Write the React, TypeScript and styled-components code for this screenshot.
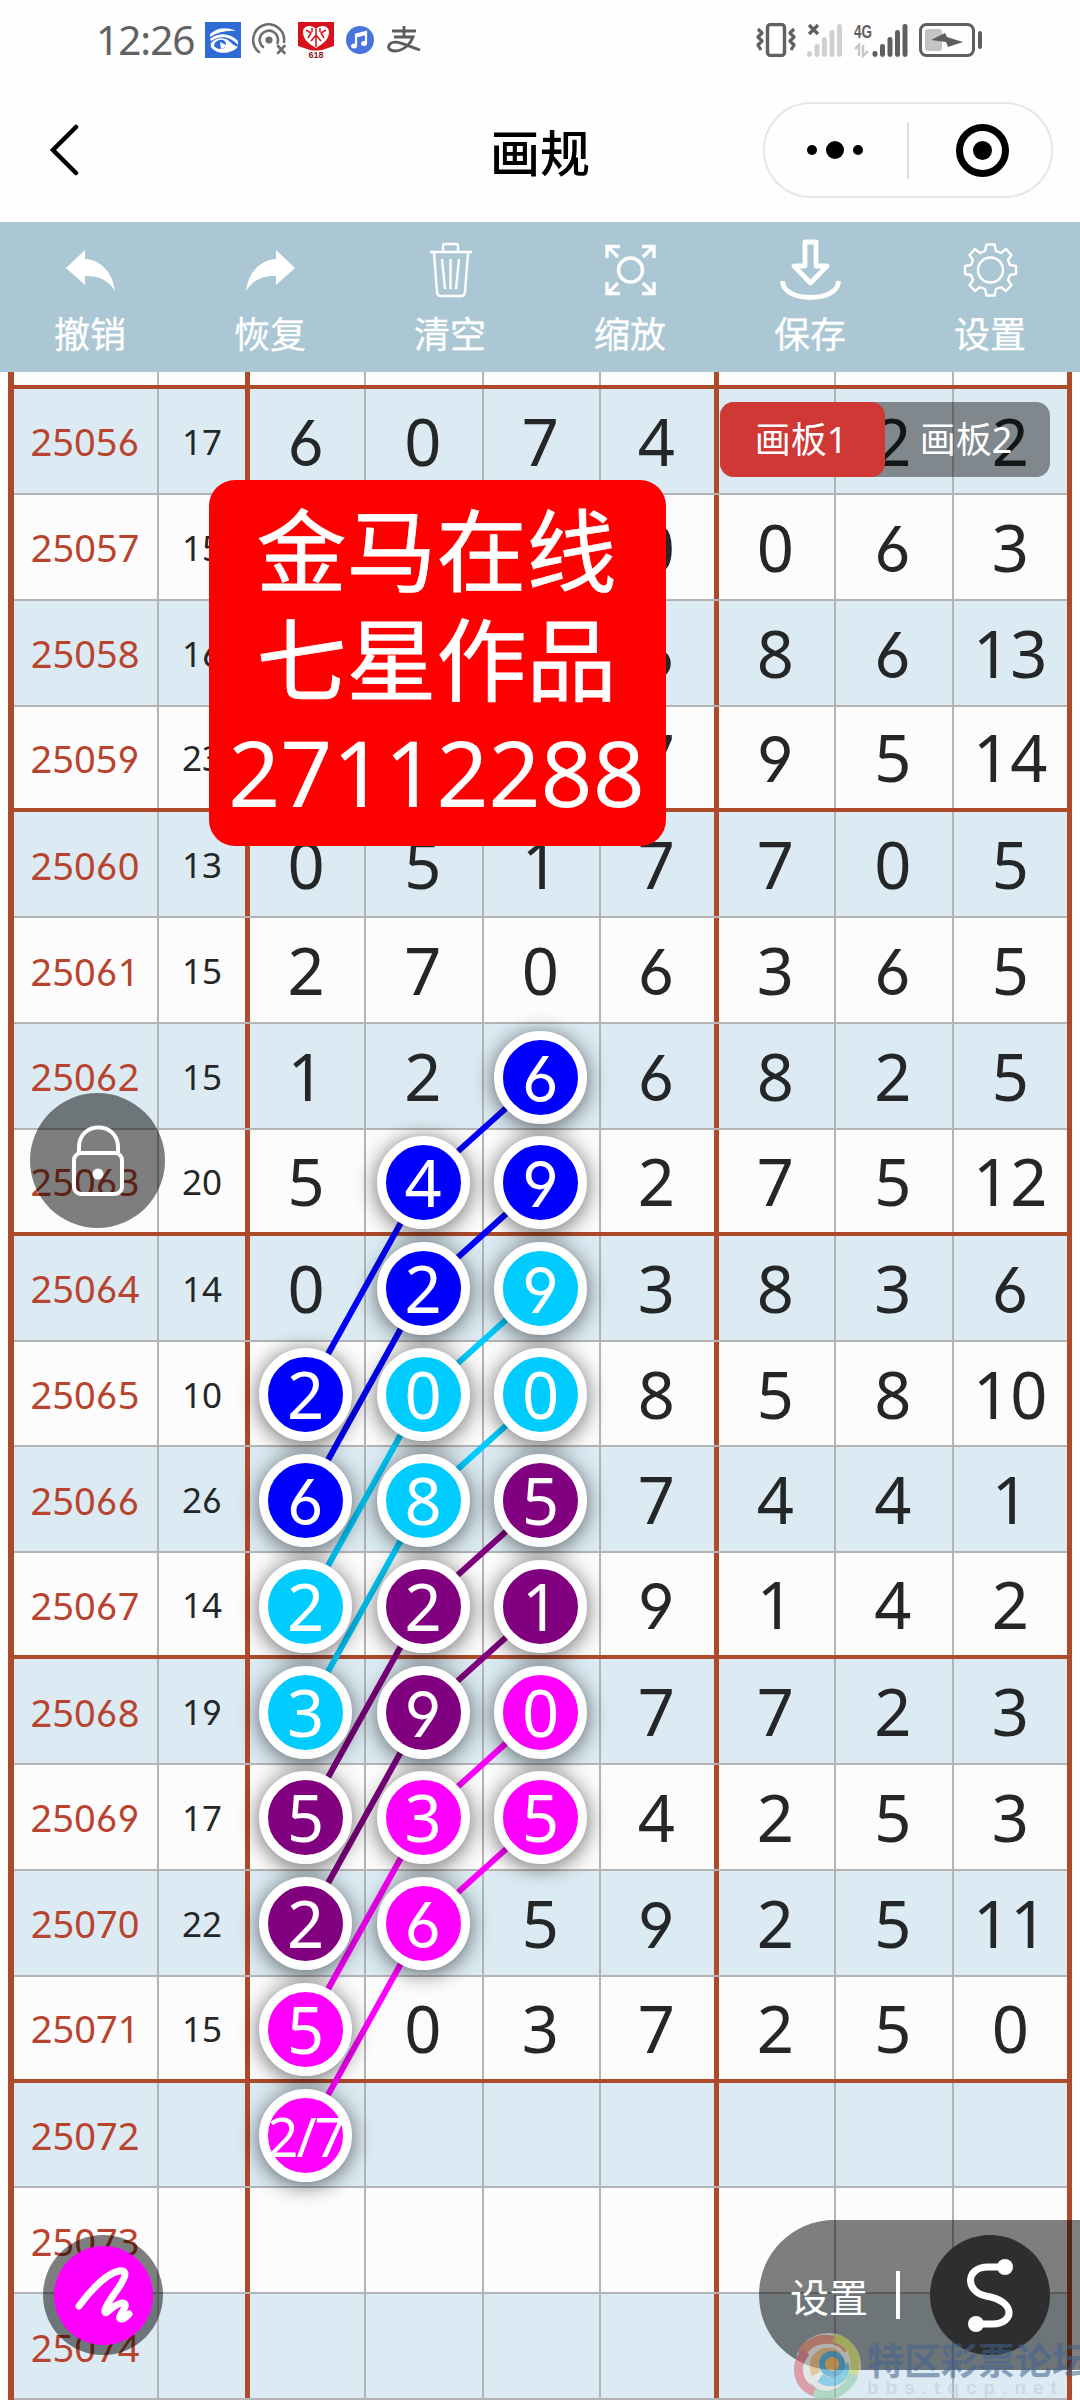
import React from 'react';
import styled, { createGlobalStyle } from 'styled-components';

const Global = createGlobalStyle`
  * { box-sizing: border-box; }
  body { margin: 0; background: #fff; font-family: "Noto Sans", "Noto Sans CJK SC", sans-serif; }
`;

const cjk = '"Noto Sans CJK SC", "Noto Sans", sans-serif';
const THICK = '#ac4a2a';
const THIN = '#b4b4b6';
const ROW_H = 105.85;

const Page = styled.div`
  position: relative;
  width: 1080px;
  height: 2400px;
  overflow: hidden;
  background: #fefefe;
`;

/* ---------- status bar ---------- */
const StatusBar = styled.div`
  height: 80px;
  padding: 0 97px 0 96px;
  display: flex;
  justify-content: space-between;
  align-items: center;
`;
const StatusGroup = styled.div<{ $gap: number }>`
  display: flex;
  align-items: center;
  gap: ${(p) => p.$gap}px;
`;
const Clock = styled.span`
  width: 98px;
  font-size: 40.5px;
  font-weight: 400;
  line-height: 80px;
  letter-spacing: -1px;
  color: #626262;
`;

/* ---------- title bar ---------- */
const TitleBar = styled.div`
  height: 142px;
  padding: 0 27px;
  display: grid;
  grid-template-columns: 290px 1fr 290px;
  align-items: center;
`;
const BackIcon = styled.svg`
  margin-left: 23px;
`;
const TitleText = styled.h1`
  margin: 0 0 3px;
  font: 500 50px/70px ${cjk};
  text-align: center;
  color: #000;
`;
const Capsule = styled.div`
  width: 290px;
  height: 96px;
  margin-bottom: 2px;
  border: 2px solid #e6e6e6;
  border-radius: 48px;
  display: flex;
  align-items: center;
`;
const CapsuleHalf = styled.div<{ $shift: number }>`
  flex: 1;
  display: flex;
  justify-content: center;
  align-items: center;
  gap: 9px;
  transform: translateX(${(p) => p.$shift}px);
`;
const CapsuleLine = styled.div`
  width: 2px;
  height: 57px;
  background: #dedede;
`;
const Dot = styled.span<{ $size: number }>`
  width: ${(p) => p.$size}px;
  height: ${(p) => p.$size}px;
  border-radius: 50%;
  background: #000;
`;
const Target = styled.span`
  width: 53px;
  height: 53px;
  border: 7px solid #000;
  border-radius: 50%;
  display: flex;
  align-items: center;
  justify-content: center;
`;

/* ---------- toolbar ---------- */
const Toolbar = styled.div`
  height: 150px;
  background: #abc7d4;
  display: grid;
  grid-template-columns: repeat(6, 1fr);
`;
const Tool = styled.div`
  display: flex;
  flex-direction: column;
  align-items: center;
  padding: 15px 0 0 0;
  color: #fff;
  svg { display: block; }
`;
const ToolLabel = styled.span`
  font: 400 36px/50px ${cjk};
  -webkit-text-stroke: 0.3px #fff;
  margin-top: 6px;
`;

/* ---------- table ---------- */
const Board = styled.div`
  position: relative;
  height: 2028px;
  overflow: hidden;
`;
const Table = styled.div`
  width: 1064px;
  margin-left: 8px;
  border-left: 6px solid ${THICK};
  border-right: 5px solid ${THICK};
`;
const Row = styled.div<{ $h: number; $tint: boolean; $thick: boolean }>`
  height: ${(p) => p.$h}px;
  display: grid;
  grid-template-columns: 145px 91px 116px 117.5px 117.5px 117.5px 117.5px 117.5px 1fr;
  background: ${(p) => (p.$tint ? '#dcebf3' : '#fcfcfc')};
  border-bottom: ${(p) => (p.$thick ? `4px solid ${THICK}` : `2px solid ${THIN}`)};
`;
const Cell = styled.div<{ $line: 'thin' | 'thick' | 'none'; $kind: 'issue' | 'sum' | 'num' }>`
  display: flex;
  align-items: center;
  justify-content: center;
  padding-top: 1px;
  padding-right: ${(p) => (p.$kind === 'sum' || p.$line === 'none' ? 0 : p.$kind === 'issue' ? 1 : 2)}px;
  border-right: ${(p) =>
    p.$line === 'thick' ? `5px solid ${THICK}` : p.$line === 'thin' ? `2px solid ${THIN}` : 'none'};
  font-size: ${(p) => (p.$kind === 'issue' ? 38 : p.$kind === 'sum' ? 35 : 65)}px;
  line-height: 1;
  color: ${(p) => (p.$kind === 'issue' ? '#b8442f' : '#242627')};
`;
/* six and nine with straight stems */
const StraightDigit = styled.span`
  font-family: Inter, "Noto Sans", sans-serif;
  font-feature-settings: "ss01" 1, "cv03" 1, "cv04" 1, "tnum" 1;
  font-size: 0.97em;
  line-height: 0;
  margin: 0 -0.028em;
`;

/* ---------- overlay drawing ---------- */
const Strokes = styled.svg`
  position: absolute;
  left: 0;
  top: 0;
`;
const Ball = styled.div<{ $x: number; $y: number; $c: string; $long: boolean }>`
  position: absolute;
  left: ${(p) => p.$x - 46.5}px;
  top: ${(p) => p.$y - 46.5}px;
  width: 93px;
  height: 93px;
  border-radius: 50%;
  border: 9px solid #fff;
  background: ${(p) => p.$c};
  box-shadow: 0 3px 22px rgba(0, 0, 0, 0.6);
  display: flex;
  align-items: center;
  justify-content: center;
  color: #fff;
  font-size: ${(p) => (p.$long ? 54 : 65)}px;
  letter-spacing: ${(p) => (p.$long ? -2 : 0)}px;
  line-height: 1;
  white-space: nowrap;
`;
const Banner = styled.div`
  position: absolute;
  left: 209px;
  top: 108px;
  width: 457px;
  height: 366px;
  border-radius: 26px;
  background: #fe0000;
  color: #fff;
  text-align: center;
  padding: 12px 2px 0 0;
`;
const BannerLine = styled.div<{ $digits?: boolean }>`
  height: ${(p) => (p.$digits ? 124 : 109)}px;
  line-height: ${(p) => (p.$digits ? 124 : 109)}px;
  font-family: ${(p) => (p.$digits ? '"Noto Sans", sans-serif' : cjk)};
  font-size: ${(p) => (p.$digits ? 91 : 90)}px;
  -webkit-text-stroke: ${(p) => (p.$digits ? 0 : 0.8)}px #fff;
`;
const BoardTabs = styled.div`
  position: absolute;
  left: 720px;
  top: 30px;
  width: 330px;
  height: 75px;
  border-radius: 14px;
  background: rgba(0, 0, 0, 0.42);
  display: flex;
`;
const BoardTab = styled.div<{ $on?: boolean }>`
  flex: 1;
  border-radius: 14px;
  background: ${(p) => (p.$on ? '#cf3834' : 'transparent')};
  color: #fff;
  font: 400 36px/75px "Noto Sans", ${cjk};
  text-align: center;
  padding-right: 3px;
`;
const RoundButton = styled.div<{ $x: number; $y: number; $d: number }>`
  position: absolute;
  left: ${(p) => p.$x}px;
  top: ${(p) => p.$y}px;
  width: ${(p) => p.$d}px;
  height: ${(p) => p.$d}px;
  border-radius: 50%;
  background: rgba(0, 0, 0, 0.5);
  display: flex;
  align-items: center;
  justify-content: center;
`;
const PenDisc = styled.div`
  width: 99px;
  height: 99px;
  border-radius: 50%;
  background: #ff00ff;
`;
const SettingsPill = styled.div`
  position: absolute;
  left: 759px;
  bottom: 30px;
  width: 321px;
  height: 150px;
  border-radius: 75px 0 0 75px;
  background: rgba(0, 0, 0, 0.5);
  display: flex;
  align-items: center;
  padding-left: 31px;
  color: #fff;
  font: 400 39px/60px ${cjk};
`;
const PillLine = styled.span`
  width: 4px;
  height: 48px;
  margin: 0 30px 0 28px;
  background: #fff;
`;
const PillDisc = styled.div`
  width: 120px;
  height: 120px;
  border-radius: 50%;
  background: #2e2e2e;
`;
const Watermark = styled.div`
  position: absolute;
  left: 794px;
  bottom: 0;
  width: 286px;
  height: 68px;
  display: flex;
  gap: 5px;
  overflow: hidden;
  opacity: 0.55;
  svg { flex: none; }
`;
const WatermarkText = styled.div`
  display: flex;
  flex-direction: column;
  white-space: nowrap;
`;
const WatermarkName = styled.span`
  font: 700 37px/54px ${cjk};
  height: 46px;
  color: #3f628f;
`;
const WatermarkUrl = styled.span`
  font: 700 19px/20px "Liberation Sans", sans-serif;
  letter-spacing: 7px;
  color: #bccad6;
`;

const rows: [string, string, string[]][] = [
  ['25056', '17', ['6', '0', '7', '4', '0', '2', '2']],
  ['25057', '15', ['5', '3', '7', '0', '0', '6', '3']],
  ['25058', '16', ['2', '1', '7', '6', '8', '6', '13']],
  ['25059', '23', ['9', '5', '2', '7', '9', '5', '14']],
  ['25060', '13', ['0', '5', '1', '7', '7', '0', '5']],
  ['25061', '15', ['2', '7', '0', '6', '3', '6', '5']],
  ['25062', '15', ['1', '2', '', '6', '8', '2', '5']],
  ['25063', '20', ['5', '', '', '2', '7', '5', '12']],
  ['25064', '14', ['0', '', '', '3', '8', '3', '6']],
  ['25065', '10', ['', '', '', '8', '5', '8', '10']],
  ['25066', '26', ['', '', '', '7', '4', '4', '1']],
  ['25067', '14', ['', '', '', '9', '1', '4', '2']],
  ['25068', '19', ['', '', '', '7', '7', '2', '3']],
  ['25069', '17', ['', '', '', '4', '2', '5', '3']],
  ['25070', '22', ['', '', '5', '9', '2', '5', '11']],
  ['25071', '15', ['', '0', '3', '7', '2', '5', '0']],
  ['25072', '', ['', '', '', '', '', '', '']],
  ['25073', '', ['', '', '', '', '', '', '']],
  ['25074', '', ['', '', '', '', '', '', '']],
];

const BLUE = '#0000fe';
const CYAN = '#00ccff';
const PURPLE = '#800080';
const PINK = '#ff00ff';

/* each chain starts at the given row in column 3, then column 2 one row below,
   then column 1 three rows below */
const chains: { row: number; color: string; text: [string, string, string] }[] = [
  { row: 6, color: BLUE, text: ['6', '4', '2'] },
  { row: 7, color: BLUE, text: ['9', '2', '6'] },
  { row: 8, color: CYAN, text: ['9', '0', '2'] },
  { row: 9, color: CYAN, text: ['0', '8', '3'] },
  { row: 10, color: PURPLE, text: ['5', '2', '5'] },
  { row: 11, color: PURPLE, text: ['1', '9', '2'] },
  { row: 12, color: PINK, text: ['0', '3', '5'] },
  { row: 13, color: PINK, text: ['5', '6', '2/7'] },
];
const colX = [305.5, 423, 540.5];
const rowY = (i: number) => 17 + ROW_H * (i + 0.5);
const points = (row: number) => [
  { x: colX[2], y: rowY(row) },
  { x: colX[1], y: rowY(row + 1) },
  { x: colX[0], y: rowY(row + 3) },
];

const Digits = ({ value }: { value: string }) => (
  <span>
    {value.split('').map((ch, i) =>
      ch === '6' || ch === '9' ? <StraightDigit key={i}>{ch}</StraightDigit> : ch
    )}
  </span>
);

const bars = (color: string) =>
  [6, 13, 20, 27, 33].map((h, i) => (
    <rect key={h} x={i * 7.5} y={34 - h} width="5" height={h} rx="2.4" fill={color} />
  ));

const EyeIcon = () => (
  <svg width="36" height="36" viewBox="0 0 36 36">
    <rect width="36" height="36" fill="#2e6bd6" />
    <path d="M5 12C13 5 23 5 31 9C22 8 13 10 5 15ZM5 17C14 10 25 11 33 19V23C25 14 15 13 6 19Z" fill="#fff" />
    <path d="M6 21C11 15 20 15 24 19C27 22 30 24 33 25C27 31 16 33 9 28C6 26 5 24 6 21Z" fill="#fff" />
    <path d="M12 19C17 16 22 19 21 24C19 28 12 28 9 24C9 22 10 20 12 19Z" fill="#2e6bd6" />
    <path d="M15 20L23 24L16 27Z" fill="#fff" />
  </svg>
);
const CastIcon = () => (
  <svg width="34" height="36" viewBox="0 0 34 36" fill="none" stroke="#6e6e6e" strokeWidth="2.6" strokeLinecap="round">
    <circle cx="17" cy="18" r="3.6" fill="#6e6e6e" stroke="none" />
    <path d="M11 25A9.2 9.2 0 1 1 25.5 21" />
    <path d="M7 30A15.5 15.5 0 1 1 32 20" />
    <path d="M26 24L32.500 31M32.500 24L26 31" />
  </svg>
);
const HeartIcon = () => (
  <svg width="38" height="38" viewBox="0 0 38 38">
    <path d="M1 1H37V25L19 31L1 25Z" fill="#d8121c" />
    <path d="M19 27C10 22 6 17 6 11C6 4 15 3 19 8C23 3 32 4 32 11C32 17 28 22 19 27Z" fill="#fff" />
    <path d="M19 8V26M9 9L14 12L11 17M29 9L24 12L27 17M14 20L19 14L24 20M15 7V11M23 7V11" stroke="#d8121c" strokeWidth="1.5" fill="none" />
    <path d="M11 29.500H27V38H11Z" fill="#fefefe" />
    <text x="19" y="37" fontSize="9" fontWeight="700" textAnchor="middle" fill="#8b1a1a" fontFamily="Liberation Sans, sans-serif">618</text>
  </svg>
);
const MusicIcon = () => (
  <svg width="30" height="30" viewBox="1 0 30 30">
    <circle cx="15" cy="15" r="14" fill="#4a74dd" />
    <path d="M11 21V9.5L21 7V18" stroke="#fff" strokeWidth="2.2" fill="none" />
    <path d="M11 11L21 8.5" stroke="#fff" strokeWidth="3" />
    <ellipse cx="9" cy="21" rx="3" ry="2.5" fill="#fff" />
    <ellipse cx="19" cy="18.5" rx="3" ry="2.5" fill="#fff" />
  </svg>
);
const PayIcon = () => (
  <svg width="34" height="28" viewBox="0 0 34 28" fill="none" stroke="#5c5c5c" strokeWidth="2.8">
    <path d="M5 5H29M17 0V11M7 11H26C24 17 17 25 8 25C2 25 0 21 3 18C8 13 18 19 33 24" />
  </svg>
);
const VibrateIcon = () => (
  <svg width="40" height="34" viewBox="0 0 40 34" fill="none" stroke="#5f5f5f" strokeLinejoin="round">
    <rect x="11.5" y="1.5" width="17" height="31" rx="3" strokeWidth="3.4" />
    <path d="M2 6L6 10L2 14L6 18L2 22L5 27M38 6L34 10L38 14L34 18L38 22L35 27" strokeWidth="3.2" />
  </svg>
);
const NoSignalIcon = () => (
  <svg width="36" height="35" viewBox="0 0 36 35">
    {bars('#d0d0d0')}
    <path d="M2 2L11 11M11 2L2 11" stroke="#5f5f5f" strokeWidth="3.2" />
  </svg>
);
const SignalIcon = () => (
  <svg width="54" height="35" viewBox="0 0 54 35">
    <g transform="translate(18.5 0)">{bars('#5f5f5f')}</g>
    <text x="0" y="15" fontSize="18" fontWeight="700" fill="#5f5f5f" textLength="18" lengthAdjust="spacingAndGlyphs" fontFamily="Liberation Sans, sans-serif">4G</text>
    <path d="M1 26L5 22V33M9 22V33L14 28" stroke="#c8c8c8" strokeWidth="2.5" fill="none" />
  </svg>
);
const BatteryIcon = () => (
  <svg width="64" height="34" viewBox="0 0 64 34">
    <rect x="1.5" y="1.5" width="53" height="31" rx="6" fill="none" stroke="#5f5f5f" strokeWidth="3" />
    <rect x="6" y="6" width="17" height="22" rx="3" fill="#c4c4c4" />
    <path d="M12 17L26 10L28 14L44 19L29 24L27 19Z" fill="#5f5f5f" />
    <rect x="59" y="8" width="4" height="18" rx="2" fill="#5f5f5f" />
  </svg>
);

const tools: { label: string; icon: React.ReactNode }[] = [
  { label: '撤销', icon: <path d="M6 31L25 13V22C42 23 53 37 55 54C48 43 40 39 25 39V48Z" fill="#fff" /> },
  { label: '恢复', icon: <path d="M55 31L36 13V22C19 23 8 37 6 54C13 43 21 39 36 39V48Z" fill="#fff" /> },
  {
    label: '清空',
    icon: (
      <g fill="none" stroke="#fff" strokeWidth="2.4">
        <path d="M10 15H52M23 15V9Q23 7 25 7H36Q38 7 38 9V15M14 16L17 55Q17.5 59 21 59H41Q44.5 59 45 55L48 16M22 22L25 52M30.5 22V52M39 22L36 52" />
      </g>
    ),
  },
  {
    label: '缩放',
    icon: (
      <g fill="none" stroke="#fff" strokeWidth="3.4">
        <circle cx="30.5" cy="33" r="12" />
        <path d="M7 21V9.5H20M8 10L18 20M42 9.5H54V21M53 10L43 20M7 45V56.5H20M8 56L18 46M42 56.5H54V45M53 56L43 46" />
      </g>
    ),
  },
  {
    label: '保存',
    icon: (
      <g fill="none" stroke="#fff" strokeWidth="4.8" strokeLinejoin="round">
        <path d="M25 5H36V29H47L30.5 46L14 29H25Z" />
        <path d="M2.500 44C2.500 66 58.500 66 58.500 44" />
      </g>
    ),
  },
  {
    label: '设置',
    icon: (
      <g fill="none" stroke="#fff" strokeWidth="2.4" strokeLinejoin="round">
        <circle cx="30.5" cy="33" r="12.5" />
        <path d="M26.500 7.500H34.500L36 14L41 16L46 12L51.500 18L48 23L50 28L56 29V37L50 38L48 43L51.500 48L46 54L41 50L36 52L34.500 58.500H26.500L25 52L20 50L15 54L9.500 48L13 43L11 38L5 37V29L11 28L13 23L9.500 18L15 12L20 16L25 14Z" />
      </g>
    ),
  },
];

const lineFor = (i: number) => (i === 3 ? 'thick' : i === 6 ? 'none' : 'thin') as 'thin' | 'thick' | 'none';

export default function App() {
  return (
    <Page>
      <Global />
      <StatusBar>
        <StatusGroup $gap={11}>
          <Clock>12:26</Clock>
          <EyeIcon />
          <CastIcon />
          <HeartIcon />
          <MusicIcon />
          <PayIcon />
        </StatusGroup>
        <StatusGroup $gap={11}>
          <VibrateIcon />
          <NoSignalIcon />
          <SignalIcon />
          <BatteryIcon />
        </StatusGroup>
      </StatusBar>
      <TitleBar>
        <BackIcon width="30" height="54" viewBox="0 0 30 54" fill="none" stroke="#000" strokeWidth="4.5" strokeLinecap="round">
          <path d="M26 3L3 26L26 49" />
        </BackIcon>
        <TitleText>画规</TitleText>
        <Capsule>
          <CapsuleHalf $shift={-1}>
            <Dot $size={10} />
            <Dot $size={18} />
            <Dot $size={10} />
          </CapsuleHalf>
          <CapsuleLine />
          <CapsuleHalf $shift={2}>
            <Target>
              <Dot $size={19} />
            </Target>
          </CapsuleHalf>
        </Capsule>
      </TitleBar>
      <Toolbar>
        {tools.map((t) => (
          <Tool key={t.label}>
            <svg width="61" height="64" viewBox="0 0 61 64">{t.icon}</svg>
            <ToolLabel>{t.label}</ToolLabel>
          </Tool>
        ))}
      </Toolbar>
      <Board>
        <Table>
          <Row $h={17} $tint={false} $thick>
            <Cell $line="thin" $kind="issue" />
            <Cell $line="thick" $kind="sum" />
            {[0, 1, 2, 3, 4, 5, 6].map((i) => (
              <Cell key={i} $line={lineFor(i)} $kind="num" />
            ))}
          </Row>
          {rows.map(([issue, sum, nums], r) => (
            <Row key={issue} $h={ROW_H} $tint={r % 2 === 0} $thick={r % 4 === 3}>
              <Cell $line="thin" $kind="issue"><Digits value={issue} /></Cell>
              <Cell $line="thick" $kind="sum"><Digits value={sum} /></Cell>
              {nums.map((n, i) => (
                <Cell key={i} $line={lineFor(i)} $kind="num"><Digits value={n} /></Cell>
              ))}
            </Row>
          ))}
        </Table>
        <Strokes width="1080" height="2028">
          {chains.map((c) => (
            <polyline
              key={c.row}
              points={points(c.row).map((p) => `${p.x},${p.y}`).join(' ')}
              fill="none"
              stroke={c.color}
              strokeWidth="6"
            />
          ))}
        </Strokes>
        {chains.map((c) =>
          points(c.row).map((p, i) => (
            <Ball key={`${c.row}-${i}`} $x={p.x} $y={p.y} $c={c.color} $long={c.text[i].length > 1}>
              <Digits value={c.text[i]} />
            </Ball>
          ))
        )}
        <Banner>
          <BannerLine>金马在线</BannerLine>
          <BannerLine>七星作品</BannerLine>
          <BannerLine $digits>27112288</BannerLine>
        </Banner>
        <BoardTabs>
          <BoardTab $on>画板1</BoardTab>
          <BoardTab>画板2</BoardTab>
        </BoardTabs>
        <RoundButton $x={30} $y={721} $d={135}>
          <svg width="60" height="80" viewBox="0 0 60 80" fill="none" stroke="#fff" strokeWidth="4">
            <rect x="6" y="32" width="48" height="41" rx="7" />
            <path d="M11 32V26C11 0 50 0 50 26V32" />
            <circle cx="30" cy="53" r="5.5" fill="#fff" stroke="none" />
          </svg>
        </RoundButton>
        <RoundButton $x={43} $y={1863} $d={120}>
          <PenDisc>
            <svg width="99" height="99" viewBox="0 0 99 99" fill="none" stroke="#fff" strokeWidth="7" strokeLinecap="round" strokeLinejoin="round">
              <path d="M25 60C37 44 51 28 65 25C76 23 69 35 65 41C60 49 53 57 51 64C50 73 60 56 69 57C77 58 61 72 67 73C71 73 73 70 75 68" />
            </svg>
          </PenDisc>
        </RoundButton>
        <SettingsPill>
          设置
          <PillLine />
          <PillDisc>
            <svg width="120" height="120" viewBox="0 0 120 120" fill="none" stroke="#fff" strokeWidth="7">
              <path d="M75 32H58C35 32 35 57 56 61C87 66 84 89 63 89H46" />
              <circle cx="75" cy="32" r="8" fill="#fff" stroke="none" />
              <circle cx="46" cy="89" r="8" fill="#fff" stroke="none" />
            </svg>
          </PillDisc>
        </SettingsPill>
        <Watermark>
          <svg width="68" height="68" viewBox="0 0 68 68" fill="none" strokeWidth="9">
            <circle cx="34" cy="34" r="33" fill="#e8e4dc" />
            <path d="M8 22C16 4 44 2 54 18" stroke="#e07a5a" />
            <path d="M40 6C60 10 68 34 54 50" stroke="#cfd24a" />
            <path d="M60 42C52 64 26 70 14 54" stroke="#8cc8a0" />
            <path d="M20 60C2 52 0 32 12 20" stroke="#d8606a" />
            <path d="M22 42C14 26 32 14 44 24" stroke="#e8a85a" />
            <path d="M26 46C40 56 54 44 50 32" stroke="#4cb8d8" />
            <circle cx="38" cy="32" r="10" stroke="#2a8fc0" strokeWidth="6" fill="#f0a030" />
          </svg>
          <WatermarkText>
            <WatermarkName>特区彩票论坛</WatermarkName>
            <WatermarkUrl>bbs.tqcp.net</WatermarkUrl>
          </WatermarkText>
        </Watermark>
      </Board>
    </Page>
  );
}
